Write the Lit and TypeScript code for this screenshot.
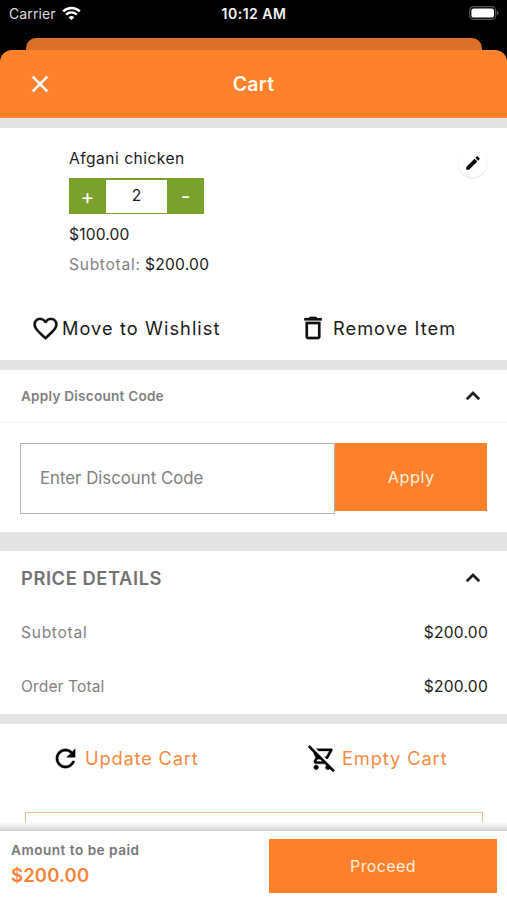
import { LitElement, html, css, svg } from "lit";
import { customElement } from "lit/decorators.js";

const icon = (size: number, d: string, weight = 0) => html`<svg width=${size} height=${size} viewBox="0 0 24 24" fill="currentColor" stroke="currentColor" stroke-width=${weight} aria-hidden="true">${svg`<path d=${d}></path>`}</svg>`;

const HEART = "M16.5 3c-1.74 0-3.41.81-4.5 2.09C10.91 3.81 9.24 3 7.5 3 4.42 3 2 5.42 2 8.5c0 3.78 3.4 6.86 8.55 11.54L12 21.35l1.45-1.32C18.6 15.36 22 12.28 22 8.5 22 5.42 19.58 3 16.5 3zm-4.4 15.55l-.1.1-.1-.1C7.14 14.24 4 11.39 4 8.5 4 6.5 5.5 5 7.5 5c1.54 0 3.04.99 3.57 2.36h1.87C13.46 5.99 14.96 5 16.5 5c2 0 3.5 1.5 3.5 3.5 0 2.89-3.14 5.74-7.9 10.05z";
const TRASH = "M6 19c0 1.1.9 2 2 2h8c1.1 0 2-.9 2-2V7H6v12zM8 9h8v10H8V9zm7.5-5l-1-1h-5l-1 1H5v2h14V4z";
const PENCIL = "M3 17.25V21h3.75L17.81 9.94l-3.75-3.75L3 17.25zM20.71 7.04c.39-.39.39-1.02 0-1.41l-2.34-2.34c-.39-.39-1.02-.39-1.41 0l-1.83 1.83 3.75 3.75 1.83-1.83z";
const CHEVRON = "M12 8l-6 6 1.41 1.41L12 10.83l4.59 4.58L18 14z";
const REFRESH = "M17.65 6.35C16.2 4.9 14.21 4 12 4c-4.42 0-7.99 3.58-7.99 8s3.57 8 7.99 8c3.73 0 6.84-2.55 7.73-6h-2.08c-.82 2.33-3.04 4-5.65 4-3.31 0-6-2.69-6-6s2.69-6 6-6c1.66 0 3.14.69 4.22 1.78L13 11h7V4l-2.35 2.35z";
const NO_CART = "M1.41 1.13L0 2.54l4.39 4.39 2.21 4.66-1.35 2.45c-.16.28-.25.61-.25.96 0 1.1.9 2 2 2h7.46l1.38 1.38c-.5.36-.83.95-.83 1.62 0 1.1.89 2 1.99 2 .67 0 1.26-.33 1.62-.84L21.46 24l1.41-1.41L1.41 1.13zM7 15l1.1-2h2.36l2 2H7zM20 4H7.12l2 2h9.19l-2.76 5h-1.44l1.94 1.94c.54-.14.99-.49 1.25-.97l3.58-6.49C21.25 4.82 20.76 4 20 4zM7 18c-1.1 0-1.99.9-1.99 2S5.9 22 7 22s2-.9 2-2-.9-2-2-2z";
const CLOSE = "M19 6.41L17.59 5 12 10.59 6.41 5 5 6.41 10.59 12 5 17.59 6.41 19 12 13.41 17.59 19 19 17.59 13.41 12z";

@customElement("app-root")
export class AppRoot extends LitElement {
  static styles = css`
    :host {
      display: flex;
      flex-direction: column;
      height: 900px;
      width: 507px;
      overflow: hidden;
      background: #fff;
      color: #1b1b1b;
      font: 400 15.6px/20px Inter, "Liberation Sans", sans-serif;
      white-space: nowrap;
    }
    * { box-sizing: border-box; }
    svg { display: block; flex: none; overflow: visible; }
    .top { background: #000; height: 118px; flex: none; display: flex; flex-direction: column; }
    .status { height: 38px; padding: 4px 8px 0 9px; display: grid; grid-template-columns: 1fr auto 1fr; color: #f4f4f4; font-size: 14px; }
    .carrier { display: flex; gap: 6px; color: #dcdcdc; letter-spacing: 0.1px; }
    .wifi { margin-top: 2px; }
    .time { font-weight: 600; letter-spacing: 0.5px; }
    .battery { justify-self: end; margin-top: 2px; }
    .behind { height: 12px; margin: 0 25px 0 26px; background: #dd7029; border-radius: 10px 10px 0 0; }
    .header { height: 68px; background: #ff812c; color: #fffaf0; border-radius: 12px 12px 0 0; display: grid; grid-template-columns: 1fr auto 1fr; align-items: center; padding: 0 26px; }
    .title { font-size: 19.5px; font-weight: 600; letter-spacing: 0.3px; }
    .gap { background: #e4e4e4; height: 10px; flex: none; }
    .gap.tall { height: 19px; }
    .item { height: 232px; flex: none; padding: 20px 19px 0 69px; position: relative; }
    .name { letter-spacing: 0.48px; margin-top: 1px; }
    .stepper { display: grid; grid-template-columns: 37px 61px 37px; width: 135px; height: 36px; margin-top: 9px; padding: 2px 0; background: #79a12b; color: #fff; text-align: center; line-height: 32px; }
    .stepper .qty { background: #fff; color: #1b1b1b; }
    .stepper .sign { font-size: 21px; line-height: 33px; }
    .price { margin-top: 11px; letter-spacing: 0.15px; }
    .sub { margin-top: 10px; }
    .amount { letter-spacing: 0.25px; }
    .muted { color: #838383; letter-spacing: 0.7px; }
    .muted.order { letter-spacing: 0.1px; }
    .edit { position: absolute; right: 20px; top: 20px; width: 29px; height: 29px; border-radius: 50%; display: grid; place-items: center; color: #000; background: #fff; box-shadow: 0 1px 2px #0002; }
    .actions { display: flex; margin: 39px 0 0 -38px; font-size: 18.2px; height: 28px; align-items: center; }
    .actions svg { color: #111; }
    .wish { width: 267px; display: flex; align-items: center; gap: 2px; letter-spacing: 1.07px; }
    .remove { display: flex; align-items: center; gap: 5px; letter-spacing: 1.05px; }
    .row { display: flex; justify-content: space-between; align-items: center; padding: 0 19px 0 21px; flex: none; }
    .discount-head { height: 53px; border-bottom: 1px solid #f3f3f3; padding-right: 20px; }
    .discount-head .label { font-size: 13.6px; font-weight: 600; color: #808080; letter-spacing: 0.22px; }
    .discount { height: 109px; flex: none; display: flex; align-items: flex-start; padding: 20px 20px 0; }
    .field { width: 316px; height: 71px; border: 1.5px solid #b4b4b4; padding-left: 19px; line-height: 68px; font-size: 16.8px; color: #808080; }
    .btn { background: #ff812c; color: #ffeedb; text-align: center; }
    .apply { width: 152px; height: 68px; line-height: 68px; font-size: 16.3px; letter-spacing: 0.5px; }
    .details-head { height: 54px; padding-right: 20px; }
    .details-head .label { font-size: 18.3px; font-weight: 600; color: #737373; letter-spacing: 0.6px; }
    .line { height: 54px; padding-top: 1px; }
    .line.last { height: 55px; padding-top: 0; }
    .cart-actions { display: flex; height: 68px; flex: none; align-items: center; font-size: 18.3px; color: #f78a43; padding-left: 51px; }
    .cart-actions svg { color: #000; }
    .update { width: 257px; display: flex; align-items: center; gap: 5px; letter-spacing: 0.82px; }
    .empty { display: flex; align-items: center; gap: 6px; letter-spacing: 0.88px; }
    .next { height: 10px; margin: 20px 24px 0 25px; border: 1px solid #f9b98a; border-bottom: 0; flex: none; }
    .shade { height: 9px; flex: none; background: linear-gradient(#fff, #d2d2d2); }
    .footer { height: 69px; flex: none; display: flex; justify-content: space-between; padding: 8px 10px 0 11px; }
    .due { font-size: 13.6px; font-weight: 600; color: #777; letter-spacing: 0.5px; padding-top: 1px; }
    .total { font-size: 18.5px; font-weight: 600; color: #f5833a; letter-spacing: 0.15px; line-height: 24px; margin-top: 3px; }
    .proceed { width: 228px; height: 54px; line-height: 54px; font-size: 16px; letter-spacing: 0.4px; }
  `;

  render() {
    return html`
      <div class="top">
        <div class="status">
          <div class="carrier"><span>Carrier</span>
            <svg class="wifi" width="19" height="15" viewBox="0 0 19 15" fill="none" stroke="#fff" stroke-width="2.5">
              <path d="M1.2 5.3C6 .9 13 .9 17.8 5.3"></path><path d="M4.1 8.6c3.2-2.8 7.6-2.8 10.8 0"></path>
              <path d="M6.6 11.2c1.7-1.5 4.1-1.5 5.8 0L9.5 14z" fill="#fff" stroke="none"></path>
            </svg>
          </div>
          <div class="time">10:12 AM</div>
          <svg class="battery" width="30" height="14" viewBox="0 0 30 14">
            <rect x=".7" y=".7" width="26" height="12.6" rx="3.8" fill="none" stroke="#555" stroke-width="1.2"></rect>
            <rect x="2.4" y="2.4" width="22.6" height="9.2" rx="2.2" fill="#fff"></rect>
            <path d="M28 4.8c1.7.8 1.7 3.6 0 4.4z" fill="#666"></path>
          </svg>
        </div>
        <div class="behind"></div>
        <div class="header">${icon(28, CLOSE, 0.2)}<div class="title">Cart</div></div>
      </div>
      <div class="gap"></div>
      <section class="item">
        <div class="name">Afgani chicken</div>
        <div class="stepper"><span class="sign">+</span><span class="qty">2</span><span class="sign">-</span></div>
        <div class="price">$100.00</div>
        <div class="sub"><span class="muted">Subtotal:</span> <span class="amount">$200.00</span></div>
        <div class="edit">${icon(18, PENCIL)}</div>
        <div class="actions">
          <div class="wish">${icon(29, HEART, 0.2)}<span>Move to Wishlist</span></div>
          <div class="remove">${icon(30, TRASH, 0.15)}<span>Remove Item</span></div>
        </div>
      </section>
      <div class="gap"></div>
      <div class="row discount-head"><span class="label">Apply Discount Code</span>${icon(28, CHEVRON, 0.3)}</div>
      <div class="discount">
        <div class="field">Enter Discount Code</div>
        <div class="btn apply">Apply</div>
      </div>
      <div class="gap tall"></div>
      <div class="row details-head"><span class="label">PRICE DETAILS</span>${icon(28, CHEVRON, 0.3)}</div>
      <div class="row line"><span class="muted">Subtotal</span><span class="amount">$200.00</span></div>
      <div class="row line last"><span class="muted order">Order Total</span><span class="amount">$200.00</span></div>
      <div class="gap"></div>
      <div class="cart-actions">
        <div class="update">${icon(29, REFRESH, 0.3)}<span>Update Cart</span></div>
        <div class="empty">${icon(28, NO_CART, 0.3)}<span>Empty Cart</span></div>
      </div>
      <div class="next"></div>
      <div class="shade"></div>
      <footer class="footer">
        <div><div class="due">Amount to be paid</div><div class="total">$200.00</div></div>
        <div class="btn proceed">Proceed</div>
      </footer>
    `;
  }
}
